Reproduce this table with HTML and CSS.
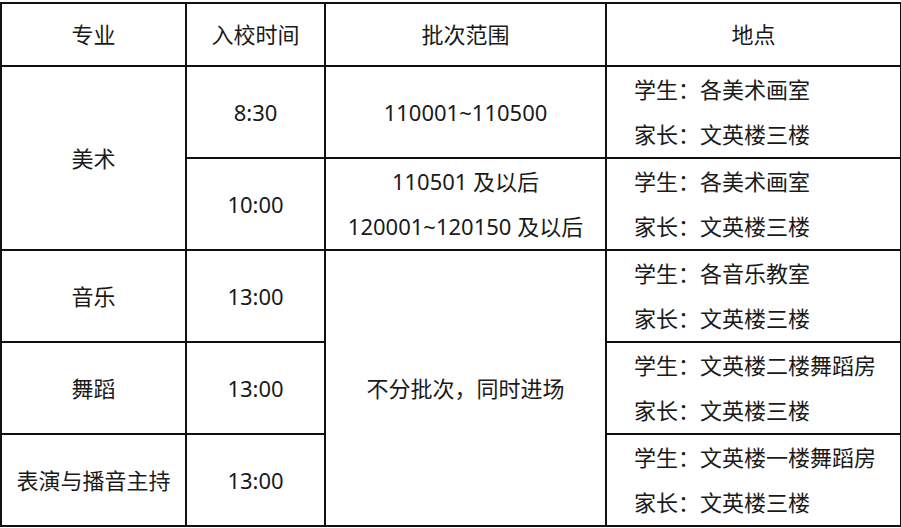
FILE: index.html
```html
<!DOCTYPE html>
<html lang="zh-CN">
<head>
<meta charset="utf-8">
<link rel="stylesheet" href="styles.css">
</head>
<body>
<div class="wrap">
<table class="sched">
  <colgroup>
    <col class="c1"><col class="c2"><col class="c3"><col class="c4">
  </colgroup>
  <thead>
    <tr class="head">
      <th>专业</th><th>入校时间</th><th>批次范围</th><th>地点</th>
    </tr>
  </thead>
  <tbody>
    <tr>
      <td rowspan="2">美术</td>
      <td>8:30</td>
      <td>110001~110500</td>
      <td class="loc">学生：各美术画室<br>家长：文英楼三楼</td>
    </tr>
    <tr>
      <td>10:00</td>
      <td>110501 及以后<br>120001~120150 及以后</td>
      <td class="loc">学生：各美术画室<br>家长：文英楼三楼</td>
    </tr>
    <tr>
      <td>音乐</td>
      <td>13:00</td>
      <td rowspan="3">不分批次，同时进场</td>
      <td class="loc">学生：各音乐教室<br>家长：文英楼三楼</td>
    </tr>
    <tr>
      <td>舞蹈</td>
      <td>13:00</td>
      <td class="loc">学生：文英楼二楼舞蹈房<br>家长：文英楼三楼</td>
    </tr>
    <tr>
      <td>表演与播音主持</td>
      <td>13:00</td>
      <td class="loc">学生：文英楼一楼舞蹈房<br>家长：文英楼三楼</td>
    </tr>
  </tbody>
</table>
</div>
</body>
</html>
```
FILE: styles.css
```css
html, body {
  margin: 0;
  padding: 0;
  background: #fff;
}
.wrap {
  padding: 2px 0 0 0;
}
.sched {
  border-collapse: collapse;
  table-layout: fixed;
  width: 900px;
  font-family: "Noto Sans", "Noto Sans CJK SC", sans-serif;
  font-size: 22px;
  color: #1a1a1a;
}
.c1 { width: 185px; }
.c2 { width: 139px; }
.c3 { width: 281px; }
.c4 { width: 295px; }
.sched th, .sched td {
  border: 2px solid #111;
  text-align: center;
  vertical-align: middle;
  padding: 0;
  font-weight: 400;
  line-height: 45px;
}
.head th {
  height: 61px;
}
.sched tbody tr {
  height: 92px;
}
.sched td.loc {
  text-align: left;
  padding-left: 27px;
}
```
